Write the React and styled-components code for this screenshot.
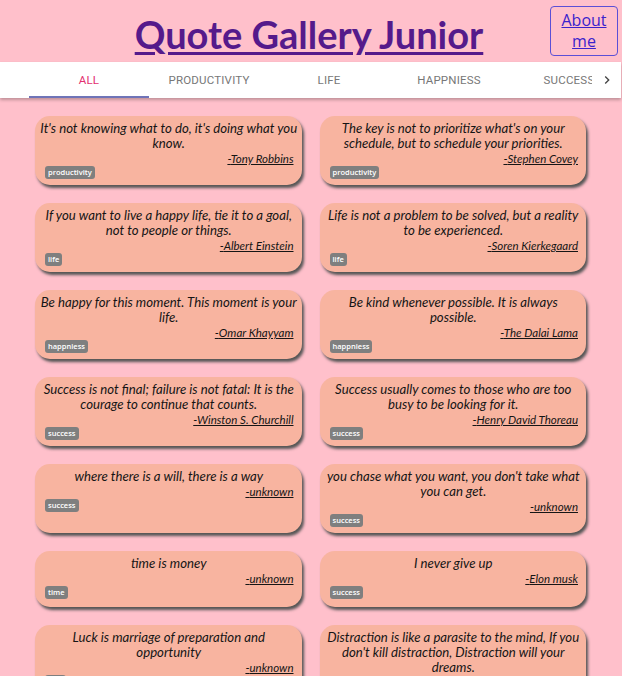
import React from 'react'
import styled, { createGlobalStyle } from 'styled-components'

const quotes = [
  { text: "It's not knowing what to do, it's doing what you know.", author: 'Tony Robbins', tag: 'productivity' },
  { text: "The key is not to prioritize what's on your schedule, but to schedule your priorities.", author: 'Stephen Covey', tag: 'productivity' },
  { text: 'If you want to live a happy life, tie it to a goal, not to people or things.', author: 'Albert Einstein', tag: 'life' },
  { text: 'Life is not a problem to be solved, but a reality to be experienced.', author: 'Soren Kierkegaard', tag: 'life' },
  { text: 'Be happy for this moment. This moment is your life.', author: 'Omar Khayyam', tag: 'happniess' },
  { text: 'Be kind whenever possible. It is always possible.', author: 'The Dalai Lama', tag: 'happniess' },
  { text: 'Success is not final; failure is not fatal: It is the courage to continue that counts.', author: 'Winston S. Churchill', tag: 'success' },
  { text: 'Success usually comes to those who are too busy to be looking for it.', author: 'Henry David Thoreau', tag: 'success' },
  { text: 'where there is a will, there is a way', author: 'unknown', tag: 'success' },
  { text: "you chase what you want, you don't take what you can get.", author: 'unknown', tag: 'success' },
  { text: 'time is money', author: 'unknown', tag: 'time' },
  { text: 'I never give up', author: 'Elon musk', tag: 'success' },
  { text: 'Luck is marriage of preparation and opportunity', author: 'unknown', tag: 'luck' },
  { text: "Distraction is like a parasite to the mind, If you don't kill distraction, Distraction will your dreams.", author: 'unknown', tag: 'focus' },
]

const tabs = ['All', 'Productivity', 'Life', 'Happniess', 'Success']

export default function App () {
  return (
    <>
      <GlobalStyle />
      <Header>
        <span />
        <Title href='#'>Quote Gallery Junior</Title>
        <AboutBox>
          <AboutLink href='#'>About me</AboutLink>
        </AboutBox>
      </Header>
      <TabBar>
        <ScrollButton $hidden />
        <TabScroller>
          {tabs.map((t, i) => (
            <Tab key={t} $active={i === 0}>{t}</Tab>
          ))}
        </TabScroller>
        <ScrollButton>
          <svg width='16' height='16' viewBox='0 0 24 24'>
            <path d='M10 6L8.59 7.41 13.17 12l-4.58 4.59L10 18l6-6z' fill='#444' />
          </svg>
        </ScrollButton>
      </TabBar>
      <Grid>
        {quotes.map((q, i) => (
          <Card key={i}>
            <QuoteText>{q.text}</QuoteText>
            <Author>-{q.author}</Author>
            <Tag>{q.tag}</Tag>
          </Card>
        ))}
      </Grid>
    </>
  )
}

const GlobalStyle = createGlobalStyle`
  html, body {
    margin: 0;
    background-color: pink;
    overflow: hidden;
  }
`

const Header = styled.header`
  display: grid;
  grid-template-columns: 1fr auto 1fr;
  align-items: start;
  padding: 6px 4px 0 0;
  height: 56px;
`

const Title = styled.a`
  color: #551a8b;
  font-family: 'Lato', sans-serif;
  font-weight: 700;
  font-size: 38px;
  line-height: 40px;
  margin-top: 8px;
  text-decoration-thickness: 3px;
  text-underline-offset: 3px;
`

const AboutBox = styled.div`
  justify-self: end;
  width: 66px;
  height: 48px;
  border: 1.5px solid #5b4fd6;
  border-radius: 4px;
  display: flex;
  align-items: center;
  justify-content: center;
  text-align: center;
`

const AboutLink = styled.a`
  color: #3b22cc;
  font-family: 'Open Sans', sans-serif;
  font-size: 16px;
  line-height: 21px;
`

const TabBar = styled.nav`
  display: flex;
  height: 36px;
  background-color: #fff;
  box-shadow: 0 2px 3px rgba(0, 0, 0, 0.25);
  margin-right: 1px;
`

const ScrollButton = styled.div`
  width: 29px;
  flex-shrink: 0;
  display: flex;
  align-items: center;
  justify-content: center;
  visibility: ${p => (p.$hidden ? 'hidden' : 'visible')};
`

const TabScroller = styled.div`
  flex: 1;
  display: flex;
  overflow: hidden;
`

const Tab = styled.div`
  flex: 0 0 120px;
  display: flex;
  align-items: center;
  justify-content: center;
  white-space: nowrap;
  text-transform: uppercase;
  font-family: 'Roboto', sans-serif;
  font-size: 11.5px;
  letter-spacing: 0.2px;
  color: ${p => (p.$active ? '#e3306f' : '#777')};
  border-bottom: 2px solid ${p => (p.$active ? '#6f74b8' : 'transparent')};
  padding-top: 2px;
`

const Grid = styled.main`
  display: grid;
  grid-template-columns: 1fr 1fr;
  gap: 18px;
  padding: 18px 36px 0 35px;
`

const Card = styled.article`
  background-color: #f8b4a0;
  border-radius: 15px;
  box-shadow: 2px 3px 3px #555;
  padding: 5px 4px 6px 5px;
  min-height: 56px;
  box-sizing: border-box;
  font-family: 'Lato', sans-serif;
  color: #151515;
  display: flex;
  flex-direction: column;
`

const QuoteText = styled.p`
  margin: 0;
  font-style: italic;
  font-size: 13.2px;
  line-height: 15px;
  text-align: center;
`

const Author = styled.span`
  align-self: flex-end;
  margin-right: 4px;
  font-style: italic;
  font-size: 11.5px;
  line-height: 15px;
  text-decoration: underline;
`

const Tag = styled.span`
  align-self: flex-start;
  margin-left: 5px;
  background-color: #7f7f7f;
  color: #fff;
  font-family: 'Open Sans', sans-serif;
  font-weight: 600;
  font-size: 7.5px;
  line-height: 13px;
  padding: 0 3px;
  border-radius: 3px;
`
